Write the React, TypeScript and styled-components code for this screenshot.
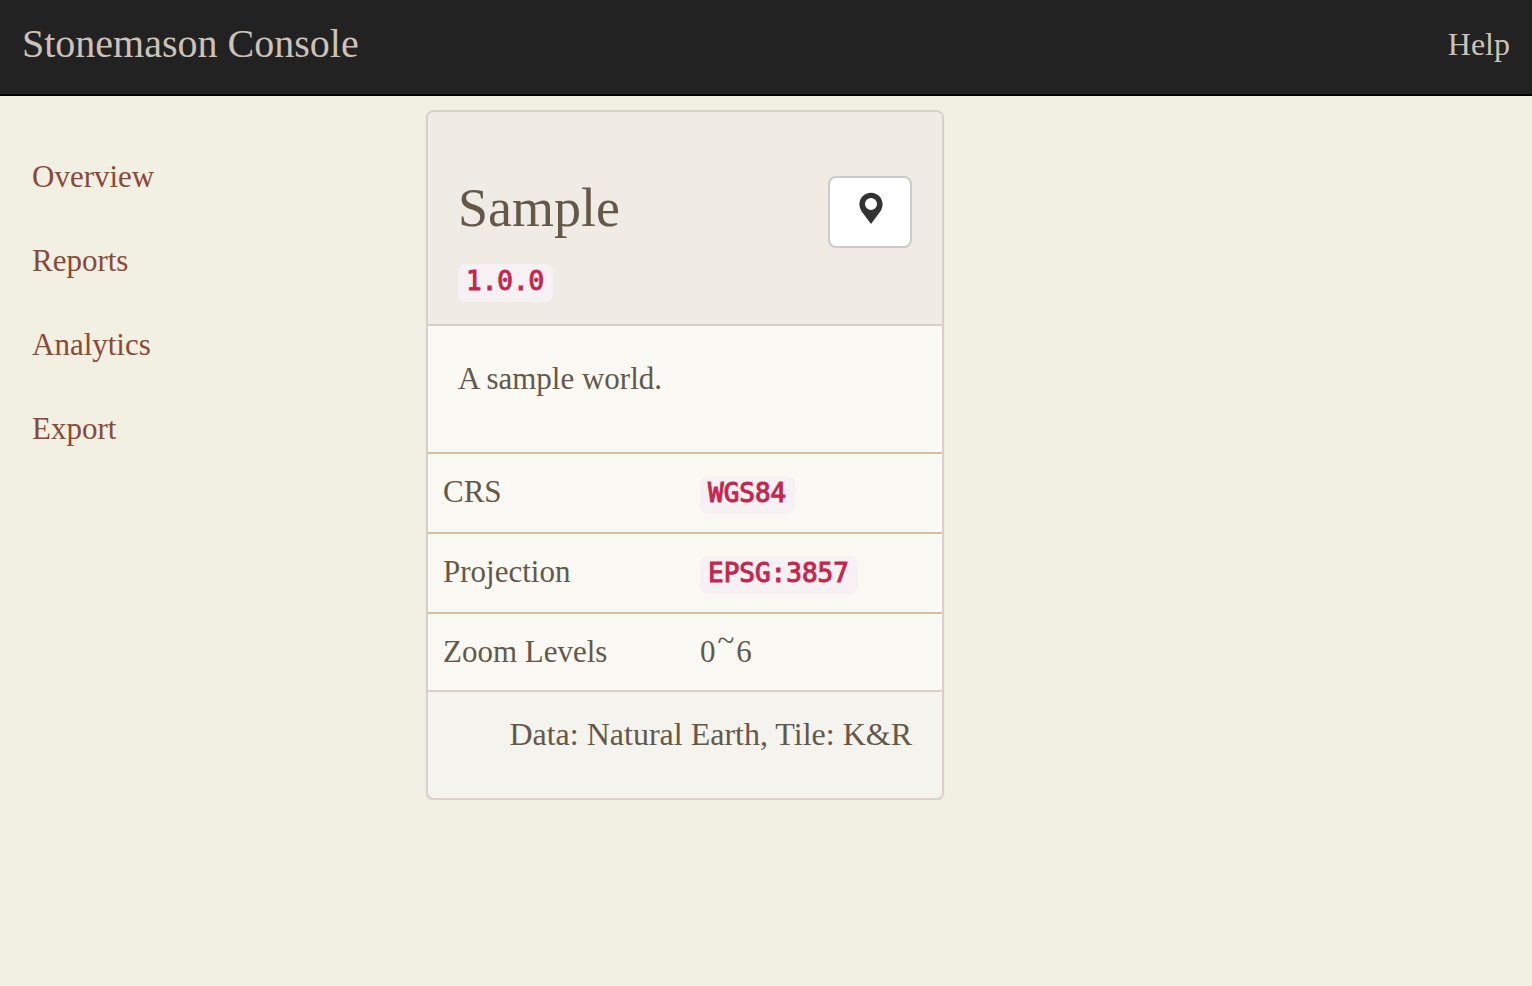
import React from 'react';
import styled, { createGlobalStyle } from 'styled-components';

const GlobalStyle = createGlobalStyle`
  *, *::before, *::after { box-sizing: border-box; }
  body {
    margin: 0;
    background: #f2efe3;
    color: #64584a;
    font-family: "Liberation Serif", serif;
    font-size: 31px;
    line-height: 40px;
  }
`;

const Navbar = styled.header`
  display: flex;
  justify-content: space-between;
  align-items: flex-start;
  padding: 22px 22px 28px;
  background: #222;
  border-bottom: 2px solid #000;
  line-height: 44px;
`;

const NavbarLink = styled.a<{ $brand?: boolean }>`
  color: #ccc2b9;
  font-size: ${(p) => (p.$brand ? 40 : 32)}px;
  text-decoration: none;
`;

const Page = styled.div`
  display: grid;
  grid-template-columns: 426fr 518fr 588fr;
  align-items: start;
`;

const Sidebar = styled.nav`
  padding-top: 39px;
`;

const SidebarList = styled.ul`
  margin: 0;
  padding: 0;
  list-style: none;
`;

const SidebarLink = styled.a`
  display: block;
  padding: 20px 32px;
  color: #8b4938;
  line-height: 44px;
  text-decoration: none;
`;

const Card = styled.article`
  margin-top: 14px;
  overflow: hidden;
  background: #faf9f4;
  border: 2px solid #d9d0c9;
  border-radius: 8px;
  box-shadow: 0 2px 2px rgba(0, 0, 0, 0.05);
`;

const CardHeader = styled.div`
  display: flex;
  justify-content: space-between;
  align-items: flex-start;
  padding: 64px 30px 22px;
  background: #f0ebe5;
  border-bottom: 2px solid #d9d0c9;
`;

const CardTitle = styled.h1`
  margin: 0 0 24px;
  font-size: 54px;
  font-weight: 400;
  line-height: 64px;
`;

const Code = styled.code`
  display: inline-block;
  padding: 0 9px 4px 8px;
  border-radius: 8px;
  background: #f8f1f4;
  color: #c7254e;
  font-family: "DejaVu Sans Mono", monospace;
  font-size: 26px;
  line-height: 34px;
  vertical-align: baseline;
  -webkit-text-stroke: 1px currentColor;
`;

const Version = styled.div`
  display: flex;
`;

const MapButton = styled.button`
  display: flex;
  justify-content: center;
  width: 84px;
  height: 72px;
  padding: 14px 0;
  background: #fff;
  border: 2px solid #ccc;
  border-radius: 8px;
  color: #333;
  cursor: pointer;
`;

const CardText = styled.p`
  margin: 0;
  padding: 33px 30px 53px;
`;

const Details = styled.table`
  width: 100%;
  table-layout: fixed;
  border-collapse: separate;
  border-spacing: 0;

  th, td {
    padding: 18px 15px;
    border-top: 2px solid #d7bfa0;
    font-weight: 400;
    text-align: left;
    vertical-align: baseline;
  }
`;

const Tilde = styled.span`
  padding: 0 2px;
  line-height: 0;
  vertical-align: super;
`;

const CardFooter = styled.footer`
  padding: 22px 30px 44px;
  background: #f5f3ee;
  border-top: 2px solid #d9d0c9;
  font-size: 32px;
  text-align: right;
  white-space: nowrap;
`;

const PinIcon = () => (
  <svg width="26" height="32" viewBox="-2 0 26 32" aria-hidden="true">
    <path
      fill="currentColor"
      fillRule="evenodd"
      d="M12 0.8C5.6 0.8 0.4 5.8 0.4 12.300c0 3.300 1.400 6 3.400 8.700L12 31.900l8.200-10.900c2-2.700 3.400-5.400 3.400-8.700C23.600 5.800 18.400 0.800 12 0.800zM12 6a6 6 0 1 1 0 12a6 6 0 1 1 0-12z"
    />
  </svg>
);

const sections = ['Overview', 'Reports', 'Analytics', 'Export'];

export default function App() {
  return (
    <>
      <GlobalStyle />
      <Navbar>
        <NavbarLink $brand href="#">Stonemason Console</NavbarLink>
        <NavbarLink href="#help">Help</NavbarLink>
      </Navbar>
      <Page>
        <Sidebar aria-label="Sections">
          <SidebarList>
            {sections.map((name) => (
              <li key={name}>
                <SidebarLink href={`#${name.toLowerCase()}`}>{name}</SidebarLink>
              </li>
            ))}
          </SidebarList>
        </Sidebar>
        <main>
          <Card>
            <CardHeader>
              <div>
                <CardTitle>Sample</CardTitle>
                <Version>
                  <Code>1.0.0</Code>
                </Version>
              </div>
              <MapButton type="button" aria-label="Map">
                <PinIcon />
              </MapButton>
            </CardHeader>
            <CardText>A sample world.</CardText>
            <Details>
              <tbody>
                <tr>
                  <th scope="row">CRS</th>
                  <td><Code>WGS84</Code></td>
                </tr>
                <tr>
                  <th scope="row">Projection</th>
                  <td><Code>EPSG:3857</Code></td>
                </tr>
                <tr>
                  <th scope="row">Zoom Levels</th>
                  <td>0<Tilde>~</Tilde>6</td>
                </tr>
              </tbody>
            </Details>
            <CardFooter>Data: Natural Earth, Tile: K&amp;R</CardFooter>
          </Card>
        </main>
      </Page>
    </>
  );
}
